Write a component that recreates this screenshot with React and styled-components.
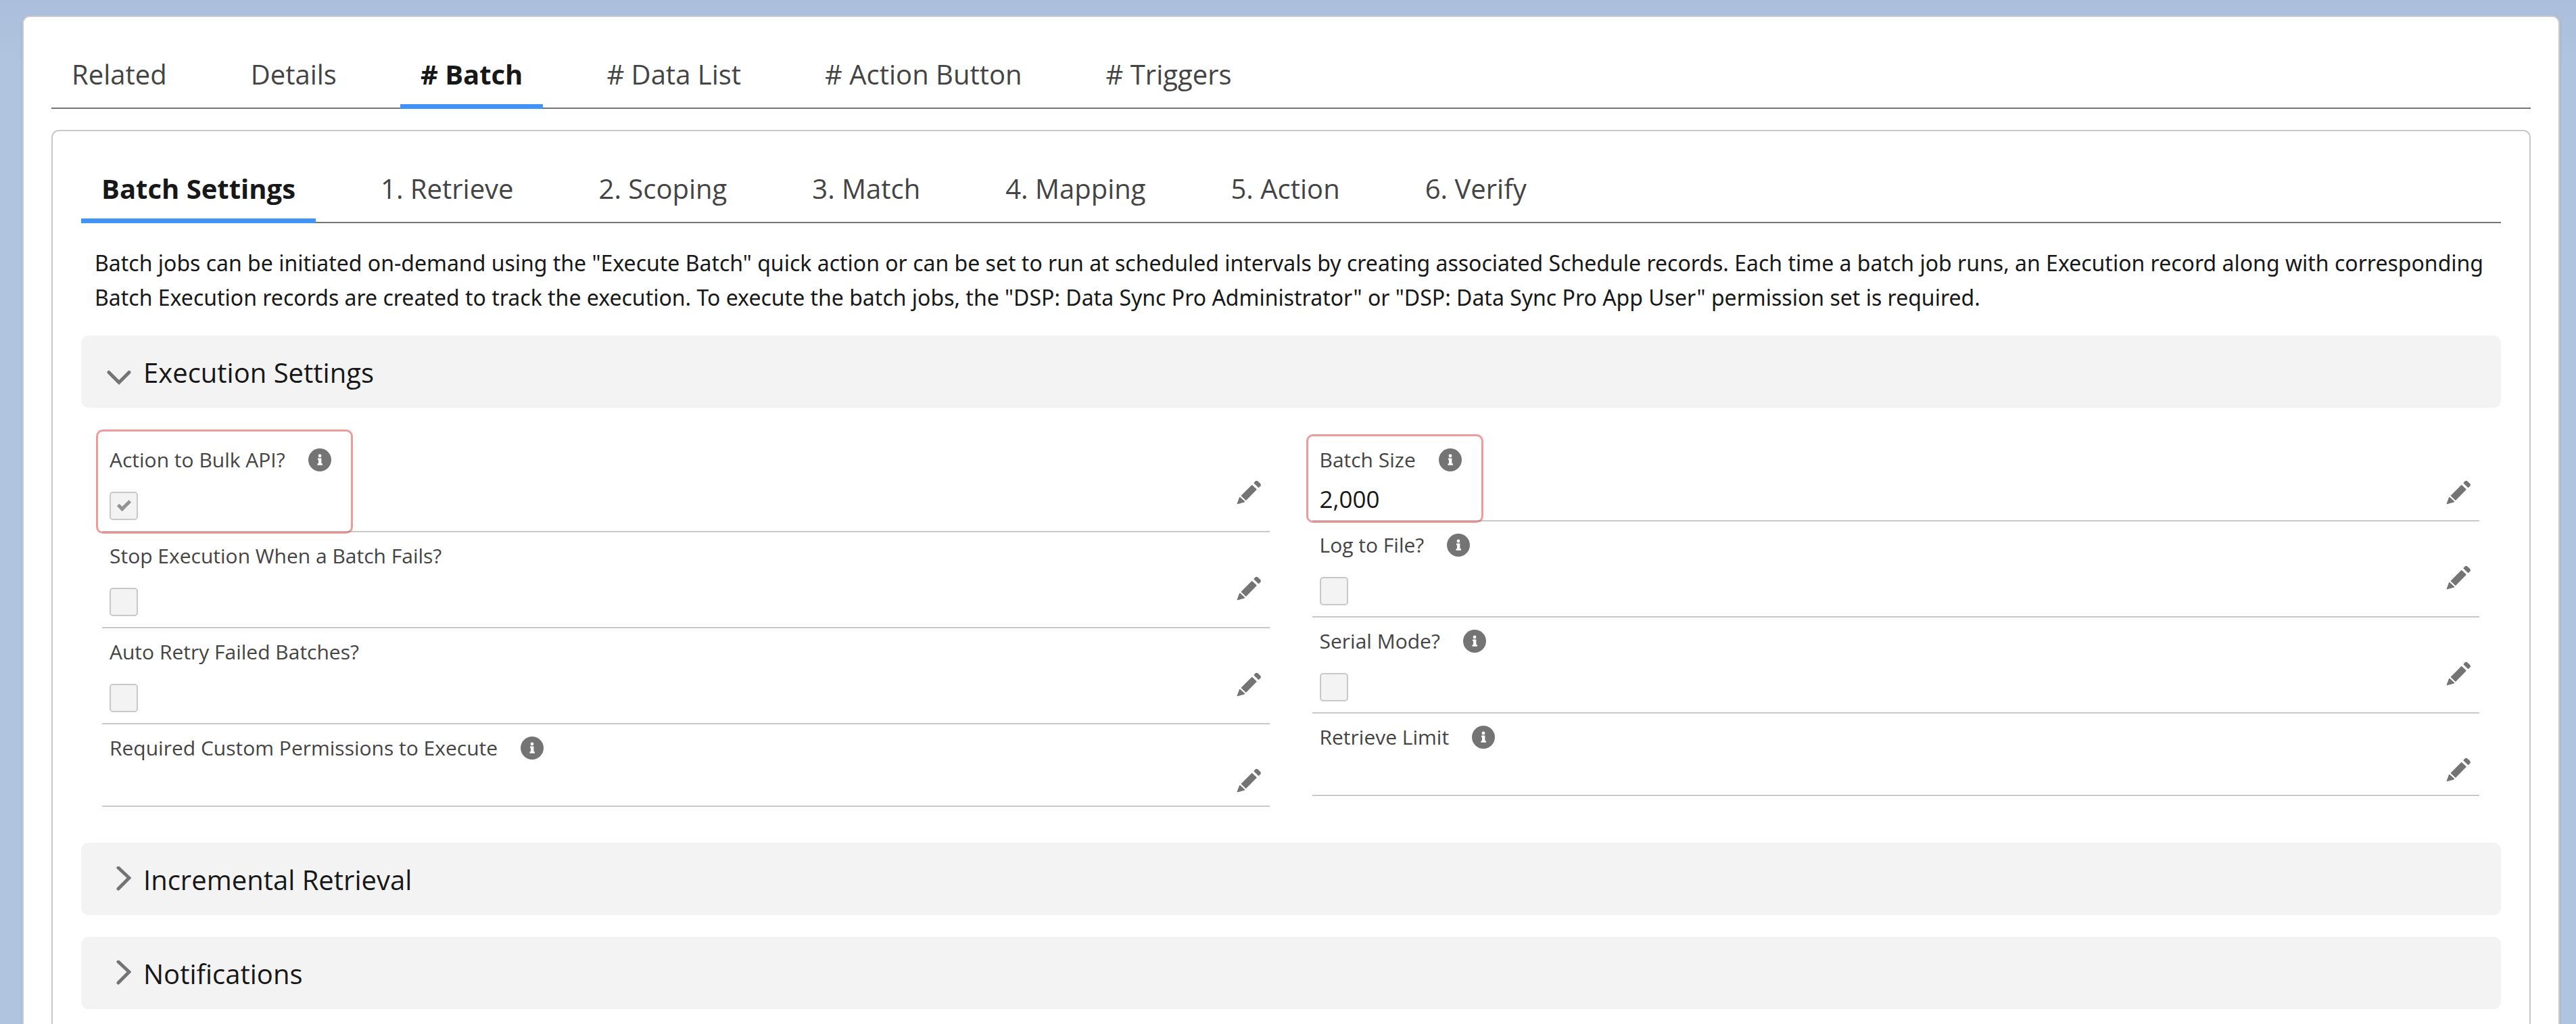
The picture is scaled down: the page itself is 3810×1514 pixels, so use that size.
import React, { useState } from "react";
import styled, { createGlobalStyle, css } from "styled-components";

const color = {
  text: "#181818",
  label: "#444444",
  icon: "#747474",
  line: "#c9c9c9",
  fill: "#f3f3f3",
  accent: "#4094f7",
  mark: "rgba(220, 56, 56, 0.5)",
};

const GlobalStyle = createGlobalStyle`
  *, *::before, *::after { box-sizing: border-box; }
  body {
    margin: 0;
    color: ${color.text};
    font-family: "Open Sans", "Noto Sans", sans-serif;
  }
  button {
    margin: 0;
    padding: 0;
    border: 0;
    background: none;
    color: inherit;
    font: inherit;
    cursor: pointer;
  }
`;

const Page = styled.div`
  height: 100vh;
  overflow: hidden;
  padding: 23px 24px 0 33px;
  background: linear-gradient(#abbfdc, #b0c4df 100px);
`;

const Card = styled.main`
  padding: 0 41px 42px;
  border: 2px solid ${color.line};
  border-radius: 11px;
  background: #ffffff;
  box-shadow: 0 2px 4px rgba(0, 0, 0, 0.1);
`;

const Panel = styled.section`
  margin-top: 31px;
  padding: 0 42px 42px;
  border: 2px solid ${color.line};
  border-radius: 11px;
`;

const TabList = styled.div`
  display: flex;
  gap: ${(p) => (p.$nested ? "66px" : "64px")};
  box-shadow: inset 0 -2px ${color.icon};
`;

const Tab = styled.button`
  && {
    padding: 41px 30px 0;
    border-bottom: 7px solid transparent;
    color: ${color.label};
    font-size: 40px;
    line-height: 88px;
    white-space: nowrap;
    ${(p) =>
      p.$active &&
      css`
        border-bottom-color: ${color.accent};
        color: ${color.text};
        font-weight: 700;
      `}
  }
`;

const Description = styled.p`
  margin: 33px 0 31px;
  padding: 0 16px 0 20px;
  font-family: "Noto Sans", sans-serif;
  font-size: 32px;
  line-height: 51px;
`;

const Sections = styled.div`
  display: flex;
  flex-direction: column;
  gap: 32px;
`;

const SectionTitle = styled.h3`
  margin: 0;
  font-size: 40px;
  font-weight: 400;
`;

const SectionToggle = styled.button`
  && {
    display: flex;
    align-items: center;
    gap: 18px;
    width: 100%;
    height: 107px;
    padding: 2px 38px 0;
    border-radius: 11px;
    background: ${color.fill};
  }
`;

const FieldGrid = styled.div`
  display: grid;
  grid-template-columns: 1fr 1fr;
  align-items: start;
  gap: 63px;
  padding: 42px 32px 21px 31px;
`;

const FieldRow = styled.div`
  display: flex;
  justify-content: space-between;
  min-height: 122px;
  padding: 0 13px 0 11px;
  border-bottom: 2px solid ${color.line};
`;

const FieldContent = styled.div`
  position: relative;
  padding-top: 14px;
`;

const LabelLine = styled.div`
  display: flex;
  align-items: center;
  gap: 34px;
  height: 42px;
  color: ${color.label};
  font-size: 30px;
  line-height: 42px;
  white-space: nowrap;
`;

const Value = styled.output`
  display: block;
  margin-top: 12px;
  padding-bottom: 6px;
  font-size: 35px;
  line-height: 50px;
`;

const Checkbox = styled.input`
  appearance: none;
  display: block;
  width: 42px;
  height: 42px;
  margin: 26px 0 16px;
  border: 2px solid ${color.line};
  border-radius: 5px;
  background: ${color.fill};

  &:checked::after {
    content: "";
    display: block;
    width: 11px;
    height: 19px;
    margin: 7px auto 0;
    border: solid #939393;
    border-width: 0 5px 5px 0;
    transform: rotate(45deg);
  }
`;

const Highlight = styled.span`
  position: absolute;
  top: ${(p) => (p.$tall ? "-10px" : "-3px")};
  right: -32px;
  bottom: -4px;
  left: -20px;
  border: 3px solid ${color.mark};
  border-radius: 10px;
  pointer-events: none;
`;

const InfoButton = styled.button`
  && {
    width: 34px;
    height: 34px;
  }
`;

const EditButton = styled.button`
  && {
    width: 36px;
    height: 36px;
    margin-top: 65px;
  }
`;

const Icon = styled.svg`
  display: block;
  flex: none;
`;

const Chevron = ({ open }) => (
  <Icon width="36" height="40" viewBox="0 0 36 40" aria-hidden="true">
    <path
      d={open ? "M3 19.5 18 34.5 33 19.5" : "M17 2 33 17 17 33"}
      fill="none"
      stroke={color.icon}
      strokeWidth="5"
      strokeLinecap="round"
    />
  </Icon>
);

const InfoIcon = () => (
  <Icon width="34" height="34" viewBox="0 0 34 34" aria-hidden="true">
    <circle cx="17" cy="17" r="17" fill={color.icon} />
    <circle cx="17" cy="11" r="2.4" fill="#fff" />
    <path d="M14 14.5h5.4v7.8h1.5v2.4h-7.4v-2.4h1.5v-5.4H14z" fill="#fff" />
  </Icon>
);

const PencilIcon = () => (
  <Icon width="36" height="36" viewBox="0 0 36 36" aria-hidden="true">
    <g fill={color.icon} stroke={color.icon} strokeWidth="1.6" strokeLinejoin="round">
      <path d="M1.5 34.5 4.7 25.7 11.3 31.7z" />
      <path d="M7.5 23 22.7 7.8 28.8 13.6 13.8 29z" />
      <path d="M26.3 4.2 28.2 2Q29.5 1 30.8 2L34.6 5.6Q35.6 7 34.6 8.2L32.5 10.3z" />
    </g>
  </Icon>
);

const Tabs = ({ label, items, initial, nested }) => {
  const [active, setActive] = useState(initial);
  return (
    <TabList role="tablist" aria-label={label} $nested={nested}>
      {items.map((item) => (
        <Tab
          key={item}
          type="button"
          role="tab"
          aria-selected={item === active}
          $active={item === active}
          onClick={() => setActive(item)}
        >
          {item}
        </Tab>
      ))}
    </TabList>
  );
};

const Field = ({ id, label, info, kind, checked, value, marked }) => (
  <FieldRow>
    <FieldContent>
      <LabelLine>
        <label htmlFor={id}>{label}</label>
        {info && (
          <InfoButton type="button" aria-label={`Help: ${label}`}>
            <InfoIcon />
          </InfoButton>
        )}
      </LabelLine>
      {kind === "checkbox" ? (
        <Checkbox id={id} type="checkbox" defaultChecked={checked} disabled />
      ) : (
        <Value id={id}>{value}</Value>
      )}
      {marked && <Highlight $tall={kind === "checkbox"} />}
    </FieldContent>
    <EditButton type="button" aria-label={`Edit ${label}`}>
      <PencilIcon />
    </EditButton>
  </FieldRow>
);

const Section = ({ title, defaultOpen = false, children }) => {
  const [open, setOpen] = useState(defaultOpen);
  return (
    <div>
      <SectionTitle>
        <SectionToggle type="button" aria-expanded={open} onClick={() => setOpen(!open)}>
          <Chevron open={open} />
          {title}
        </SectionToggle>
      </SectionTitle>
      {open && children}
    </div>
  );
};

const recordTabs = ["Related", "Details", "# Batch", "# Data List", "# Action Button", "# Triggers"];

const batchTabs = [
  "Batch Settings",
  "1. Retrieve",
  "2. Scoping",
  "3. Match",
  "4. Mapping",
  "5. Action",
  "6. Verify",
];

const leftFields = [
  { id: "bulk-api", label: "Action to Bulk API?", info: true, kind: "checkbox", checked: true, marked: true },
  { id: "stop-on-fail", label: "Stop Execution When a Batch Fails?", kind: "checkbox" },
  { id: "auto-retry", label: "Auto Retry Failed Batches?", kind: "checkbox" },
  { id: "permissions", label: "Required Custom Permissions to Execute", info: true },
];

const rightFields = [
  { id: "batch-size", label: "Batch Size", info: true, value: "2,000", marked: true },
  { id: "log-to-file", label: "Log to File?", info: true, kind: "checkbox" },
  { id: "serial-mode", label: "Serial Mode?", info: true, kind: "checkbox" },
  { id: "retrieve-limit", label: "Retrieve Limit", info: true },
];

export default function App() {
  return (
    <>
      <GlobalStyle />
      <Page>
        <Card>
          <Tabs label="Record" items={recordTabs} initial="# Batch" />
          <Panel>
            <Tabs label="Batch" items={batchTabs} initial="Batch Settings" nested />
            <Description>
              Batch jobs can be initiated on-demand using the "Execute Batch" quick action or can be
              set to run at scheduled intervals by creating associated Schedule records. Each time a
              batch job runs, an Execution record along with corresponding Batch Execution records
              are created to track the execution. To execute the batch jobs, the "DSP: Data Sync Pro
              Administrator" or "DSP: Data Sync Pro App User" permission set is required.
            </Description>
            <Sections>
              <Section title="Execution Settings" defaultOpen>
                <FieldGrid>
                  {[leftFields, rightFields].map((fields, index) => (
                    <div key={index}>
                      {fields.map((field) => (
                        <Field key={field.id} {...field} />
                      ))}
                    </div>
                  ))}
                </FieldGrid>
              </Section>
              <Section title="Incremental Retrieval" />
              <Section title="Notifications" />
            </Sections>
          </Panel>
        </Card>
      </Page>
    </>
  );
}
